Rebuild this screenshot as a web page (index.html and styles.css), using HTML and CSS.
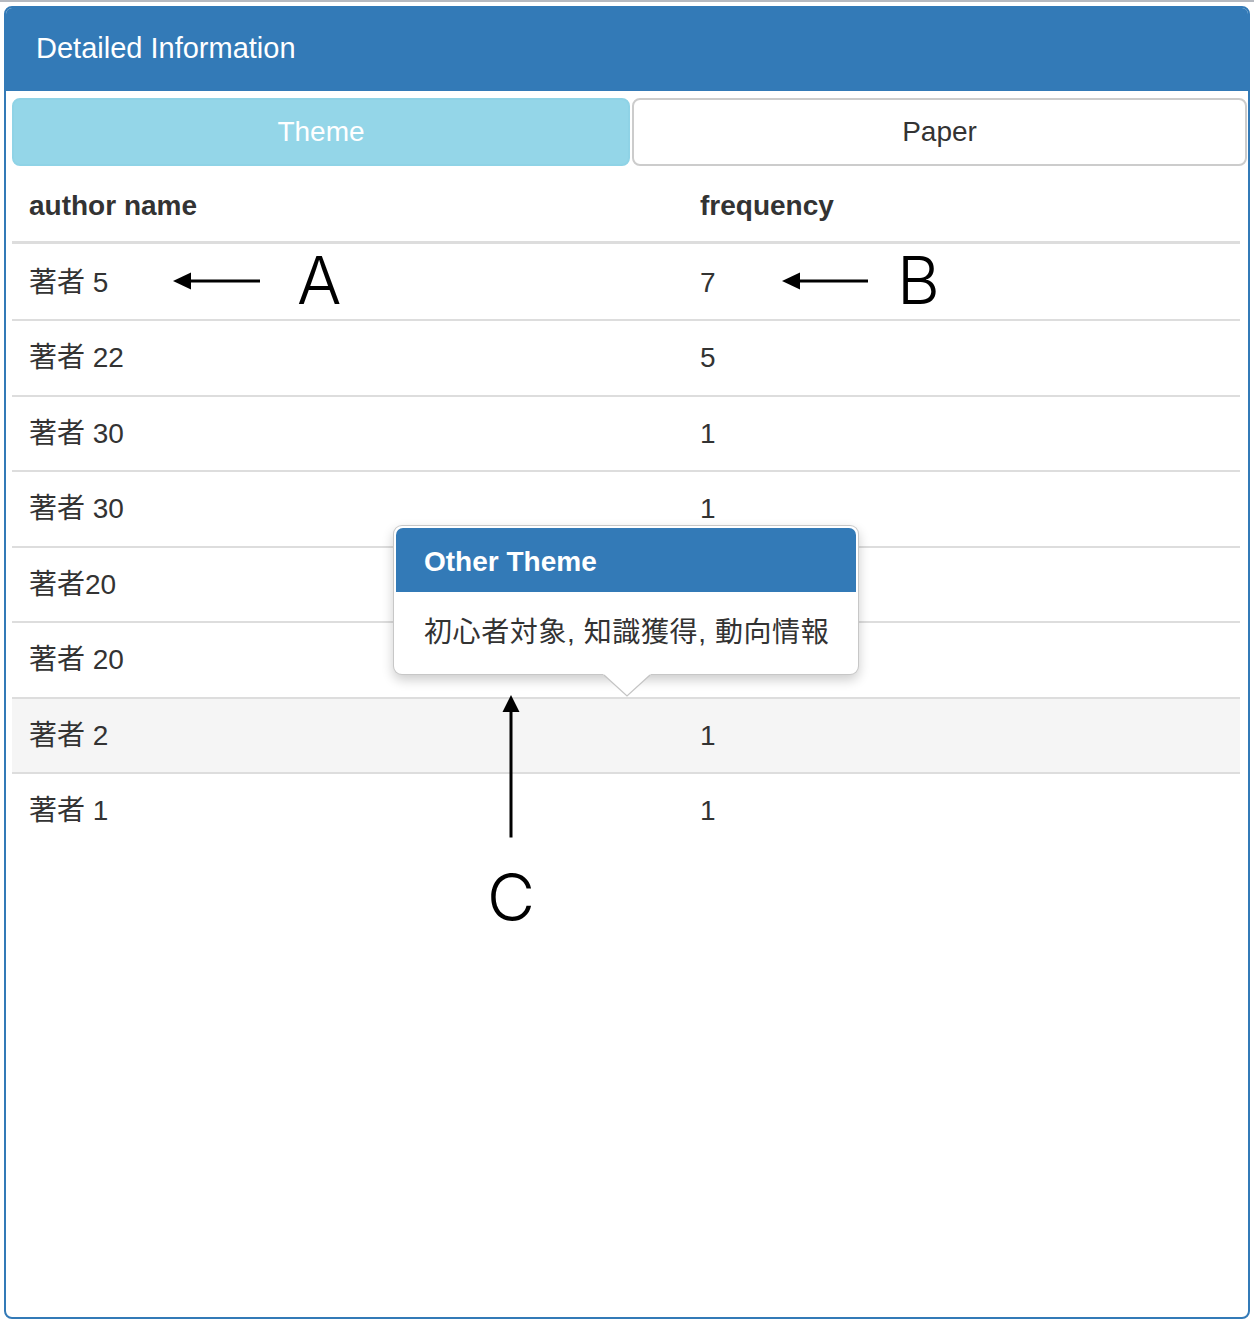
FILE: index.html
```html
<!DOCTYPE html>
<html lang="ja">
<head>
<meta charset="utf-8">
<title>Detailed Information</title>
<link rel="stylesheet" href="styles.css">
</head>
<body>
<div class="page">
  <div class="topbar"></div>
  <div class="panel">
    <div class="panel-heading">
      <h3 class="panel-title">Detailed Information</h3>
    </div>
    <div class="panel-body">
      <div class="tabs">
        <button class="tab tab-active">Theme</button>
        <button class="tab">Paper</button>
      </div>
      <table class="table">
        <thead>
          <tr><th class="col-name">author name</th><th class="col-freq">frequency</th></tr>
        </thead>
        <tbody>
          <tr><td>著者 5</td><td>7</td></tr>
          <tr><td>著者 22</td><td>5</td></tr>
          <tr><td>著者 30</td><td>1</td></tr>
          <tr><td>著者 30</td><td>1</td></tr>
          <tr><td>著者20</td><td></td></tr>
          <tr><td>著者 20</td><td></td></tr>
          <tr class="row-hover"><td>著者 2</td><td>1</td></tr>
          <tr><td>著者 1</td><td>1</td></tr>
        </tbody>
      </table>
    </div>
  </div>

  <div class="popover">
    <div class="popover-title">Other Theme</div>
    <div class="popover-content">初心者対象, 知識獲得, 動向情報</div>
    <svg class="popover-arrow" width="48" height="24" viewBox="0 0 48 24">
      <polygon points="0,0 24,22.5 48,0" fill="#ffffff"/>
      <polyline points="1,1 24,22 47,1" fill="none" stroke="#c4c4c4" stroke-width="1.2"/>
    </svg>
  </div>

  <svg class="annotations" width="1254" height="1324" viewBox="0 0 1254 1324">
    <rect x="190" y="279.5" width="70" height="3" fill="#000"/>
    <polygon points="173,281 191,272.5 191,289.5" fill="#000"/>
    <text x="297" y="304" class="anno-letter">A</text>

    <rect x="799" y="279.5" width="69" height="3" fill="#000"/>
    <polygon points="782,281 800,272.5 800,289.5" fill="#000"/>
    <text x="897" y="304" class="anno-letter">B</text>

    <rect x="509.5" y="711" width="3" height="126.5" fill="#000"/>
    <polygon points="511,695 502.5,712 519.5,712" fill="#000"/>
    <text x="487" y="921" class="anno-letter">C</text>
  </svg>
</div>
</body>
</html>
```

FILE: styles.css
```css
* {
  box-sizing: border-box;
}

html, body {
  margin: 0;
  padding: 0;
  background: #ffffff;
}

body {
  font-family: "Liberation Sans", "Noto Sans CJK JP", sans-serif;
  color: #333333;
  font-size: 28px;
}

.page {
  position: relative;
  width: 1254px;
  height: 1324px;
  overflow: hidden;
}

.topbar {
  height: 2px;
  background: #b5b9c0;
}

.panel {
  margin: 4px 0 0 4px;
  width: 1246px;
  height: 1313px;
  border: 2px solid #337ab7;
  border-radius: 8px;
  background: #ffffff;
  overflow: hidden;
}

.panel-heading {
  background: #337ab7;
  display: flex;
  align-items: center;
  padding: 0 29px 0 32px;
  margin: -2px -2px 0 -2px;
  height: 85px;
}

.panel-title {
  margin: 0;
  color: #ffffff;
  font-weight: normal;
  font-size: 29px;
  line-height: 1;
  padding-top: 0;
}

.panel-body {
  padding: 7px 0 0 6px;
}

.tabs {
  display: flex;
  gap: 2px;
  width: 1235px;
}

.tab {
  height: 68px;
  font-family: "Liberation Sans", "Noto Sans CJK JP", sans-serif;
  font-size: 28px;
  color: #333333;
  background: #ffffff;
  border: 2px solid #cccccc;
  border-radius: 8px;
  padding: 0 0 0 0;
  flex: 0 0 615px;
}

.tab-active {
  flex: 0 0 618px;
  color: #ffffff;
  background: #94d6e8;
  border-color: #8fd3e6;
}

.table {
  width: 1228px;
  border-collapse: separate;
  border-spacing: 0;
}

.table th {
  text-align: left;
  font-weight: bold;
  padding: 19.5px 17px 16px 17px;
  line-height: 39.5px;
  border-bottom: 3px solid #dddddd;
}

.col-name {
  width: 671px;
}

.table td {
  padding: 17px;
  line-height: 39.5px;
  height: 73.5px;
  border-top: 2px solid #dddddd;
}

.table tbody tr:first-child td {
  border-top: 0;
  padding-top: 18.5px;
  height: 75px;
}

.row-hover td {
  background: #f5f5f5;
}

.popover {
  position: absolute;
  left: 393px;
  top: 525px;
  width: 466px;
  height: 150px;
  padding: 2px;
  background: #ffffff;
  border: 1px solid rgba(0, 0, 0, 0.22);
  border-radius: 9px;
  box-shadow: 0 5px 12px rgba(0, 0, 0, 0.2);
}

.popover-title {
  height: 64px;
  background: #337ab7;
  color: #ffffff;
  font-weight: bold;
  font-size: 28px;
  line-height: 64px;
  padding: 2px 0 0 28px;
  border-radius: 7px 7px 0 0;
}

.popover-content {
  padding: 21px 0 0 28px;
  line-height: 40px;
  font-size: 28px;
  letter-spacing: 0.6px;
  color: #333333;
}

.popover-arrow {
  position: absolute;
  left: 209px;
  top: calc(100% - 0.5px);
}

.annotations {
  position: absolute;
  left: 0;
  top: 0;
  pointer-events: none;
}

.anno-letter {
  font-family: "Inter", "Liberation Sans", sans-serif;
  font-weight: 300;
  font-size: 66px;
  fill: #000000;
}
```
